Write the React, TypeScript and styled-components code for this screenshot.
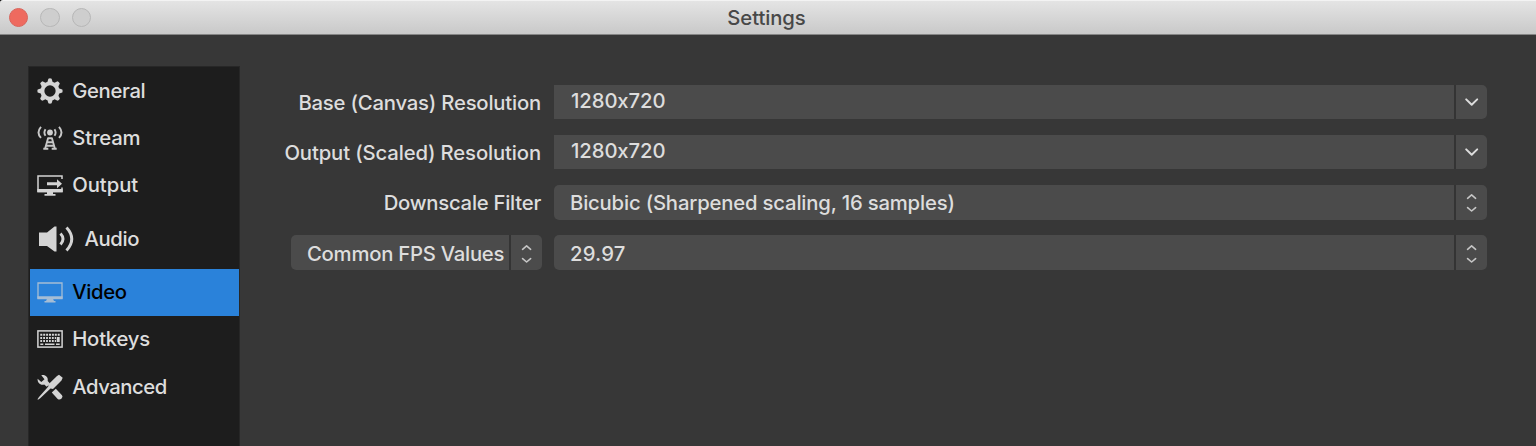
import React from "react";
import styled, { createGlobalStyle } from "styled-components";

const GlobalStyle = createGlobalStyle`
  * { box-sizing: border-box; }
  html, body { margin: 0; padding: 0; background: #373737; overflow: hidden; }
`;

const Window = styled.div`
  display: flex;
  flex-direction: column;
  width: 1536px;
  height: 446px;
  background: #373737;
  color: #dddddd;
  font-family: Inter, "Liberation Sans", sans-serif;
  font-size: 20.3px;
  font-weight: 450;
  font-feature-settings: "calt" 0;
  line-height: 24px;
  white-space: nowrap;
`;

const TitleBar = styled.header`
  display: grid;
  grid-template-columns: 1fr auto 1fr;
  align-items: center;
  height: 35px;
  flex: none;
  padding: 0 12px 0 9px;
  border-top: 1px solid #f3f3f3;
  border-bottom: 1px solid #858585;
  border-top-left-radius: 3px;
  background: linear-gradient(#e4e4e4, #c9c9c9);
  box-shadow: -4px -4px 0 #000000;
`;

const Lights = styled.div`
  display: flex;
  gap: 12px;
`;

const Light = styled.span<{ $active?: boolean }>`
  width: 19.4px;
  height: 19.4px;
  border-radius: 50%;
  border: 1px solid ${(p) => (p.$active ? "#d9655c" : "#b7b7b7")};
  background: ${(p) => (p.$active ? "#ee6a5f" : "#cecece")};
`;

const Title = styled.h1<{ $spacing: number }>`
  margin: 0;
  color: #484848;
  font-size: inherit;
  font-weight: inherit;
  letter-spacing: ${(p) => p.$spacing}px;
`;

const Body = styled.div`
  display: flex;
  flex: 1;
  min-height: 0;
  padding: 31px 49px 0 28px;
`;

const Sidebar = styled.nav`
  width: 212px;
  flex: none;
  padding: 0 0 0 1px;
  border: 1px solid #272727;
  border-width: 1px 1px 0 1px;
  background: #1d1d1d;
`;

const NavItem = styled.div<{ $selected?: boolean; $tall?: boolean }>`
  display: flex;
  align-items: center;
  height: ${(p) => (p.$tall ? 60 : 47.2)}px;
  width: 209px;
  padding-left: 7.4px;
  gap: ${(p) => (p.$tall ? 9 : 8.8)}px;
  color: ${(p) => (p.$selected ? "#000000" : "#dddddd")};
  background: ${(p) => (p.$selected ? "#2a82da" : "transparent")};

  svg { display: block; flex: none; }
`;

const Text = styled.span<{ $spacing: number }>`
  letter-spacing: ${(p) => p.$spacing}px;
`;

const Form = styled.main`
  flex: 1;
  display: grid;
  grid-template-columns: 270px 1fr;
  grid-auto-rows: 34.5px;
  align-content: start;
  gap: 15.8px 12px;
  padding: 18.5px 0 0 32px;
`;

const Label = styled.label`
  display: flex;
  align-items: center;
  justify-content: flex-end;
  padding: 2px 1px 0 0;
`;

const LabelCell = styled.div`
  display: flex;
  justify-content: flex-end;
`;

const Combo = styled.div<{ $width?: string }>`
  display: flex;
  gap: 2px;
  width: ${(p) => p.$width ?? "100%"};
  border-radius: 5px;
  background: #343434;
`;

const Value = styled.div<{ $editable?: boolean }>`
  flex: 1;
  display: flex;
  align-items: center;
  padding: ${(p) => (p.$editable ? "0 0 2px 17px" : "2px 0 0 16px")};
  border-radius: ${(p) => (p.$editable ? "0" : "5px 0 0 5px")};
  background: #4b4b4b;
`;

const Trigger = styled.div`
  width: 31px;
  display: grid;
  place-items: center;
  border-radius: 0 5px 5px 0;
  background: #4b4b4b;

  svg { display: block; }
`;

const Arrow = () => (
  <svg width="16" height="18" viewBox="0 0 16 18" fill="none" stroke="#dcdcdc" strokeWidth="2" strokeLinecap="round" strokeLinejoin="round">
    <path d="M2.2 6.4 7.7 11.8l5.5-5.4" />
  </svg>
);

const Stepper = () => (
  <svg width="16" height="22" viewBox="0 0 16 22" fill="none" stroke="#c6c6c6" strokeWidth="1.6" strokeLinecap="round" strokeLinejoin="round">
    <path d="M3.6 7.3 7.6 3.9l4 3.4M3.6 16.600l4 3.400 4-3.400" />
  </svg>
);

const GearIcon = () => (
  <svg width="26" height="26" viewBox="-13 -13 26 26">
    <circle r="7.6" fill="none" stroke="#d4d4d4" strokeWidth="3.900" />
    {[0, 45, 90, 135, 180, 225, 270, 315].map((a) => (
      <path key={a} d="M-2.800-8.600-1.600-12.300Q0-13 1.600-12.300L2.800-8.600Z" fill="#d4d4d4" transform={`rotate(${a})`} />
    ))}
  </svg>
);

const AntennaIcon = () => (
  <svg width="26" height="26" viewBox="0 0 26 26" fill="none" stroke="#c8c8c8" strokeWidth="1.9">
    <circle cx="13" cy="7.5" r="2.900" fill="#cfcfcf" stroke="none" />
    <path d="M8.500 4.200Q6.300 7.500 8.500 10.800M17.500 4.200Q19.700 7.500 17.500 10.800M4 1.800Q-1 7.500 4 12.800M22 1.800Q27 7.500 22 12.800" />
    <path d="M10.800 13.200h4.400M11.200 12.700 8 24M14.800 12.700l3.200 11.300M10 17.200h6M8.800 20.800h8.400M6.300 23.700h5M14.700 23.700h5" />
  </svg>
);

const MonitorIcon = ({ output }: { output?: boolean }) => (
  <svg width="26" height="24" viewBox="0 0 26 24">
    {output ? (
      <g fill="#d4d4d4">
        <path d="M25 6V3H1V18.500H25V14.500" fill="none" stroke="#d4d4d4" strokeWidth="1.500" />
        <path d="M.4 16h25.200v3.200H.4ZM10 19h6v2h2.500v1.700h-11V21H10Z" />
        <path d="M10 9.200h10V6.200l5 4.500-5 4.500v-3H10Z" />
      </g>
    ) : (
      <g fill="#a5bdd5">
        <path d="M1 3h24v15H1Z" fill="none" stroke="#a5bdd5" strokeWidth="1.300" />
        <path d="M.4 16.200h25.200v3H.4ZM10 19h6l1 2h1.500v1.500h-11V21H9Z" />
      </g>
    )}
  </svg>
);

const SpeakerIcon = () => (
  <svg width="38" height="28" viewBox="0 0 38 28" fill="none" stroke="#d4d4d4">
    <path d="M2 7.500H10L17.500 1.500H19.500V26.500H17.500L10 21H2Z" fill="#d4d4d4" stroke="none" />
    <path d="M23.500 8.500Q28.500 14 23.500 19.500M29.500 2.500Q40 14 29.500 25.500" strokeWidth="2.900" />
  </svg>
);

const KeyboardIcon = () => (
  <svg width="26" height="20" viewBox="0 0 26 20" fill="none" stroke="#d4d4d4">
    <rect x=".9" y="1.900" width="24.200" height="16.200" strokeWidth="1.500" />
    <path d="M3.300 5.800H22.700" strokeWidth="2" strokeDasharray="2 .9" />
    <path d="M3.300 8.900H19M3.300 12H19" strokeWidth="2" strokeDasharray="1.800 1.100" />
    <path d="M21.200 8v5" strokeWidth="3" />
    <path d="M3.300 15.200h3M8 15.200h9.500M19 15.200h3.700" strokeWidth="1.600" />
  </svg>
);

const ToolsIcon = () => (
  <svg width="26" height="26" viewBox="0 0 26 26" fill="#d4d4d4">
    <path d="M4.300 1.200C8 .2 11.500 3 10.700 7L13 9.600 9.800 12.800 7.200 10.600C3.500 11.700.3 9 .6 4.800L4.300 7.900 7.500 5.200Z" />
    <path d="M14.800 18.500 18.800 14.700 25 21.200Q26 23 24.400 24.700 22.500 26.200 20.700 24.900Z" />
    <path d="M22 .8 25.700 3.700 24.500 6.500 16 15 13.500 14.600 3.200 24.300 1 25.700.5 25.300 2 23 11.300 12.500 11.300 10.400 20 2Z" />
  </svg>
);

const sections = [
  { name: "General", icon: <GearIcon />, spacing: -0.35 },
  { name: "Stream", icon: <AntennaIcon />, spacing: -0.15 },
  { name: "Output", icon: <MonitorIcon output />, spacing: -0.05 },
  { name: "Audio", icon: <SpeakerIcon />, spacing: -0.35, tall: true },
  { name: "Video", icon: <MonitorIcon />, spacing: -0.35, selected: true },
  { name: "Hotkeys", icon: <KeyboardIcon />, spacing: -0.2 },
  { name: "Advanced", icon: <ToolsIcon />, spacing: -0.45 },
];

export default function App() {
  return (
    <Window>
      <GlobalStyle />
      <TitleBar>
        <Lights>
          <Light $active />
          <Light />
          <Light />
        </Lights>
        <Title $spacing={-0.1}>Settings</Title>
      </TitleBar>
      <Body>
        <Sidebar>
          {sections.map((s) => (
            <NavItem key={s.name} $selected={s.selected} $tall={s.tall}>
              {s.icon}
              <Text $spacing={s.spacing}>{s.name}</Text>
            </NavItem>
          ))}
        </Sidebar>
        <Form>
          <Label><Text $spacing={-0.2}>Base (Canvas) Resolution</Text></Label>
          <Combo>
            <Value $editable><Text $spacing={-0.1}>1280x720</Text></Value>
            <Trigger><Arrow /></Trigger>
          </Combo>
          <Label><Text $spacing={-0.13}>Output (Scaled) Resolution</Text></Label>
          <Combo>
            <Value $editable><Text $spacing={-0.1}>1280x720</Text></Value>
            <Trigger><Arrow /></Trigger>
          </Combo>
          <Label><Text $spacing={-0.25}>Downscale Filter</Text></Label>
          <Combo>
            <Value><Text $spacing={-0.18}>Bicubic (Sharpened scaling, 16 samples)</Text></Value>
            <Trigger><Stepper /></Trigger>
          </Combo>
          <LabelCell>
            <Combo $width="251px">
              <Value><Text $spacing={-0.25}>Common FPS Values</Text></Value>
              <Trigger><Stepper /></Trigger>
            </Combo>
          </LabelCell>
          <Combo>
            <Value><Text $spacing={0.15}>29.97</Text></Value>
            <Trigger><Stepper /></Trigger>
          </Combo>
        </Form>
      </Body>
    </Window>
  );
}
